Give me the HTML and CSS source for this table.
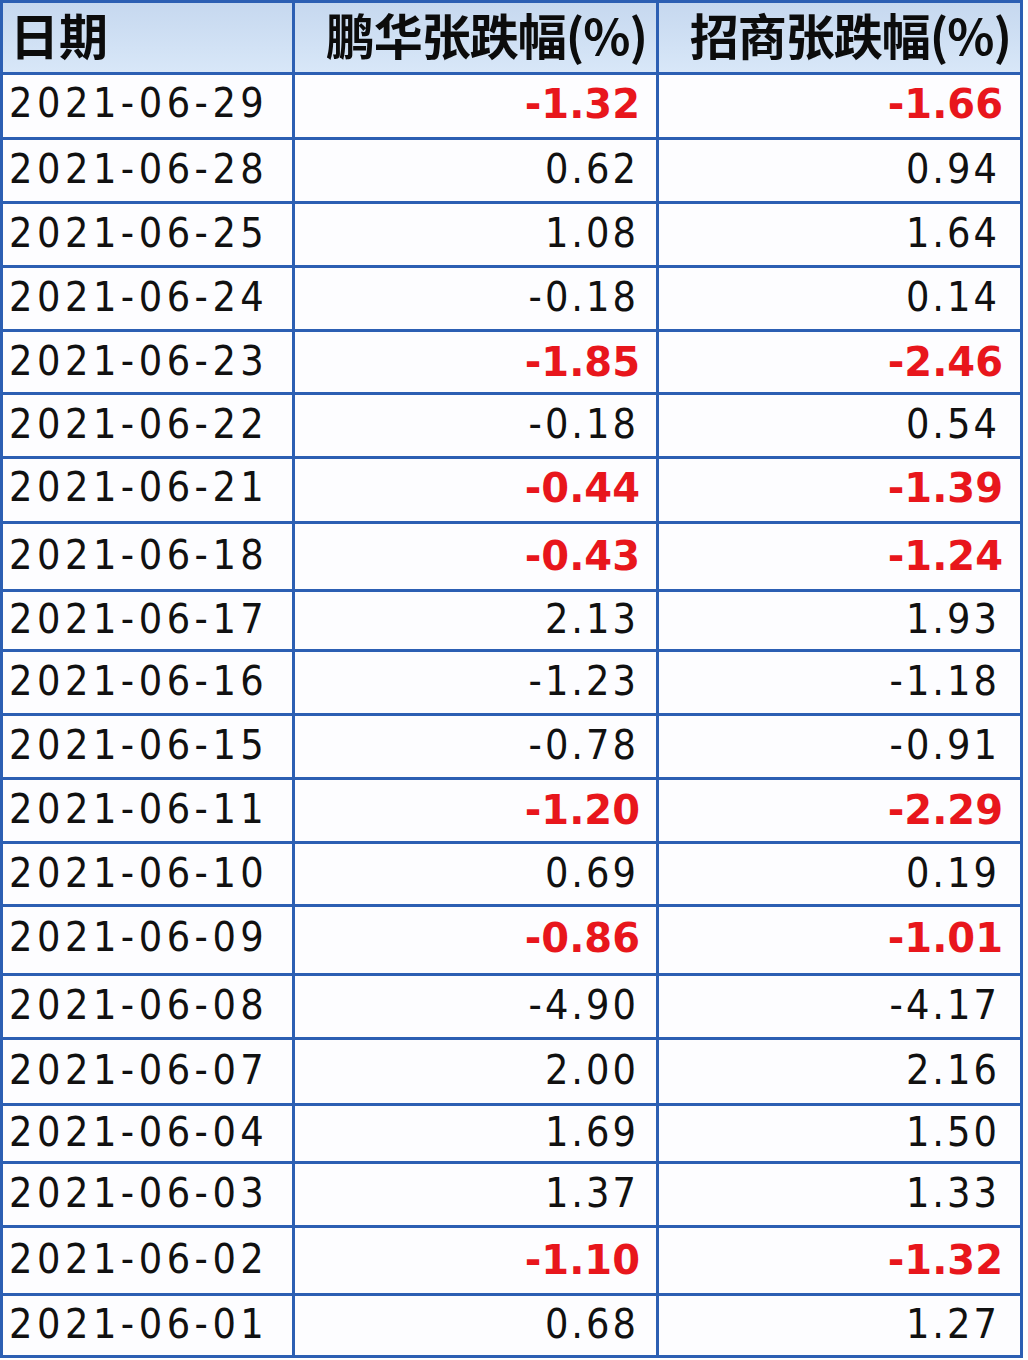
FILE: index.html
```html
<!DOCTYPE html>
<html lang="zh-CN">
<head>
<meta charset="utf-8">
<title>涨跌幅对比</title>
<link rel="stylesheet" href="styles.css">
</head>
<body>
<table class="grid">
  <thead>
    <tr class="head">
      <th class="c-date">日期</th>
      <th class="c-a">鹏华张跌幅(%)</th>
      <th class="c-b">招商张跌幅(%)</th>
    </tr>
  </thead>
  <tbody>
    <tr><td class="c-date">2021-06-29</td><td class="c-a neg">-1.32</td><td class="c-b neg">-1.66</td></tr>
    <tr><td class="c-date">2021-06-28</td><td class="c-a">0.62</td><td class="c-b">0.94</td></tr>
    <tr><td class="c-date">2021-06-25</td><td class="c-a">1.08</td><td class="c-b">1.64</td></tr>
    <tr><td class="c-date">2021-06-24</td><td class="c-a">-0.18</td><td class="c-b">0.14</td></tr>
    <tr><td class="c-date">2021-06-23</td><td class="c-a neg">-1.85</td><td class="c-b neg">-2.46</td></tr>
    <tr><td class="c-date">2021-06-22</td><td class="c-a">-0.18</td><td class="c-b">0.54</td></tr>
    <tr><td class="c-date">2021-06-21</td><td class="c-a neg">-0.44</td><td class="c-b neg">-1.39</td></tr>
    <tr><td class="c-date">2021-06-18</td><td class="c-a neg">-0.43</td><td class="c-b neg">-1.24</td></tr>
    <tr><td class="c-date">2021-06-17</td><td class="c-a">2.13</td><td class="c-b">1.93</td></tr>
    <tr><td class="c-date">2021-06-16</td><td class="c-a">-1.23</td><td class="c-b">-1.18</td></tr>
    <tr><td class="c-date">2021-06-15</td><td class="c-a">-0.78</td><td class="c-b">-0.91</td></tr>
    <tr><td class="c-date">2021-06-11</td><td class="c-a neg">-1.20</td><td class="c-b neg">-2.29</td></tr>
    <tr><td class="c-date">2021-06-10</td><td class="c-a">0.69</td><td class="c-b">0.19</td></tr>
    <tr><td class="c-date">2021-06-09</td><td class="c-a neg">-0.86</td><td class="c-b neg">-1.01</td></tr>
    <tr><td class="c-date">2021-06-08</td><td class="c-a">-4.90</td><td class="c-b">-4.17</td></tr>
    <tr><td class="c-date">2021-06-07</td><td class="c-a">2.00</td><td class="c-b">2.16</td></tr>
    <tr><td class="c-date">2021-06-04</td><td class="c-a">1.69</td><td class="c-b">1.50</td></tr>
    <tr><td class="c-date">2021-06-03</td><td class="c-a">1.37</td><td class="c-b">1.33</td></tr>
    <tr><td class="c-date">2021-06-02</td><td class="c-a neg">-1.10</td><td class="c-b neg">-1.32</td></tr>
    <tr><td class="c-date">2021-06-01</td><td class="c-a">0.68</td><td class="c-b">1.27</td></tr>
  </tbody>
</table>
</body>
</html>
```

FILE: styles.css
```css
html, body {
  margin: 0;
  padding: 0;
  background: #ffffff;
}

.grid {
  border-collapse: separate;
  border-spacing: 0;
  table-layout: fixed;
  width: 1023px;
  border-top: 3px solid #2c5fb3;
  border-left: 3px solid #2c5fb3;
  background: #fdfdff;
}

.grid th,
.grid td {
  border-right: 3px solid #2c5fb3;
  border-bottom: 3px solid #2c5fb3;
  padding: 0;
  box-sizing: border-box;
  white-space: nowrap;
}

.grid .c-date { width: 292px; }
.grid .c-a { width: 364px; }
.grid .c-b { width: 364px; }

.head th {
  height: 72px;
  background: linear-gradient(to bottom, #c6d8ef, #d8e7f8);
  font-family: "Noto Sans CJK SC", sans-serif;
  font-weight: 700;
  font-size: 49px;
  color: #0c0c0c;
  line-height: 1.2;
  text-align: right;
  letter-spacing: -1px;
  padding-right: 9px;
  padding-bottom: 6px;
}

.head th.c-date {
  text-align: left;
  letter-spacing: 0;
  padding-left: 7px;
  padding-right: 0;
}

.grid td {
  height: 64px;
  font-family: "DejaVu Sans Condensed", "DejaVu Sans", sans-serif;
  font-stretch: condensed;
  font-size: 41px;
  letter-spacing: 3px;
  color: #111111;
  line-height: 1.2;
  text-align: right;
  padding-bottom: 1px;
}

.grid td.c-date {
  text-align: left;
  letter-spacing: 4.5px;
  padding-left: 6px;
}

.grid td.c-a { padding-right: 17px; }
.grid td.c-b { padding-right: 20px; }

.grid td.neg {
  color: #e8161c;
  font-family: "DejaVu Sans", sans-serif;
  font-stretch: normal;
  font-weight: 700;
  font-size: 40px;
  letter-spacing: 0;
  padding-right: 16px;
}

.grid td.c-b.neg { padding-right: 17px; }

tbody tr:nth-child(1) td { height: 65px; padding-bottom: 4px; }
tbody tr:nth-child(5) td { height: 63px; }
tbody tr:nth-child(7) td { height: 65px; padding-bottom: 4px; }
tbody tr:nth-child(8) td { height: 68px; }
tbody tr:nth-child(9) td { height: 60px; }
tbody tr:nth-child(13) td { height: 63px; }
tbody tr:nth-child(14) td { height: 69px; padding-bottom: 4px; }
tbody tr:nth-child(16) td { height: 66px; }
tbody tr:nth-child(17) td { height: 58px; }
tbody tr:nth-child(19) td { height: 68px; }
tbody tr:nth-child(20) td { height: 62px; }
```
